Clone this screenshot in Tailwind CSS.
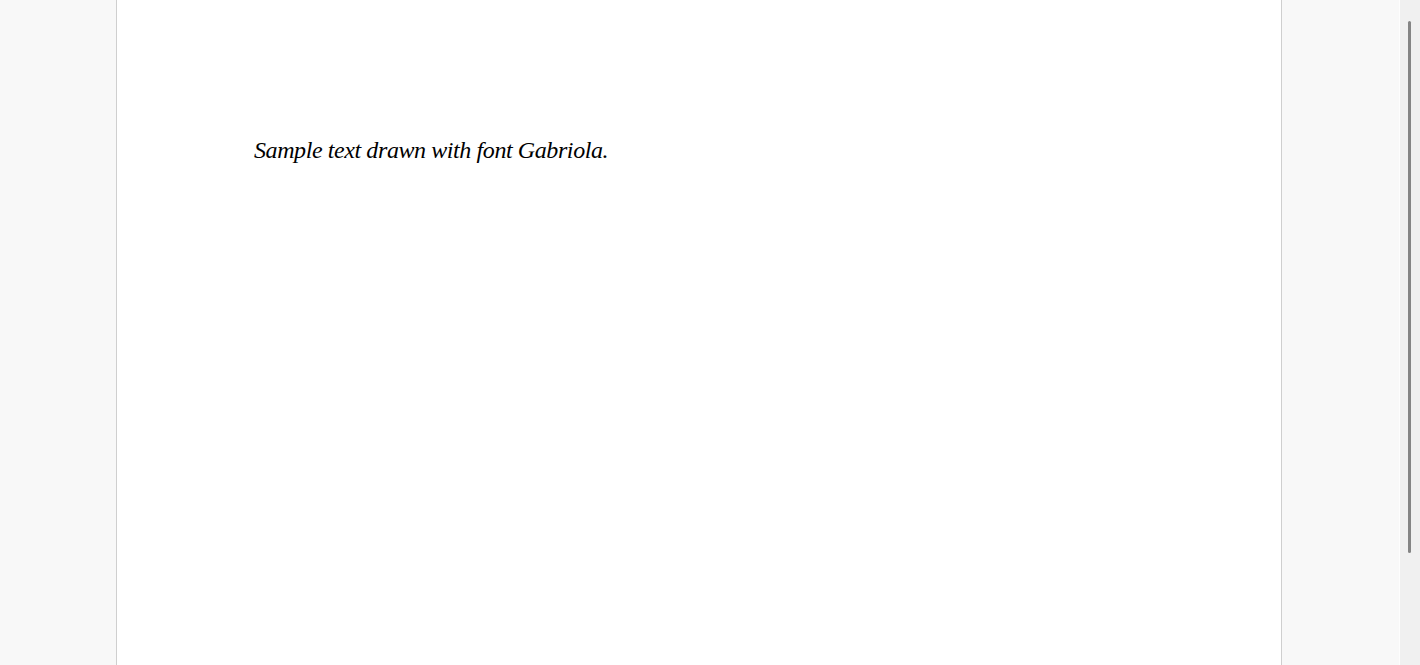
<!DOCTYPE html>
<html lang="en">
<head>
<meta charset="utf-8">
<title>Gabriola sample</title>
<script src="https://cdn.jsdelivr.net/npm/@tailwindcss/browser@4"></script>
</head>
<body class="h-[665px] overflow-hidden bg-[#f8f8f8]">
<div class="flex h-[665px] w-[1420px]">
  <main class="flex-1 min-w-0 pl-[116px] pr-[117px]">
    <div class="h-full border-x border-[#cfcfcf] bg-white pl-[137px] pt-[134px]">
      <p class="font-['Liberation_Serif',serif] italic text-[24px] tracking-[-0.41px] leading-[32px] text-black whitespace-nowrap">Sample text drawn with font Gabriola.</p>
    </div>
  </main>
  <div class="w-[21px] shrink-0 border-l border-[#fdfdfd] bg-[#f0f0f0] pt-[21px] pl-[8px]">
    <div class="h-[532px] w-[3px] rounded-full bg-[#858585]"></div>
  </div>
</div>
</body>
</html>
